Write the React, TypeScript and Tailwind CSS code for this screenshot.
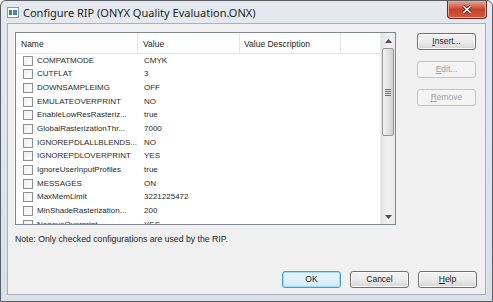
import React from "react";

const rows: [string, string][] = [
  ["COMPATMODE", "CMYK"],
  ["CUTFLAT", "3"],
  ["DOWNSAMPLEIMG", "OFF"],
  ["EMULATEOVERPRINT", "NO"],
  ["EnableLowResRasteriz...", "true"],
  ["GlobalRasterizationThr...", "7000"],
  ["IGNOREPDLALLBLENDS...", "NO"],
  ["IGNOREPDLOVERPRINT", "YES"],
  ["IgnoreUserInputProfiles", "true"],
  ["MESSAGES", "ON"],
  ["MaxMemLimit", "3221225472"],
  ["MinShadeRasterization...", "200"],
  ["NoneveOverprint", "YES"],
];

const ui = { fontFamily: '"Liberation Sans", Arial, sans-serif' };

function Btn({ label, u, disabled, primary }: { label: string; u?: number; disabled?: boolean; primary?: boolean }) {
  return (
    <div
      className={`flex h-[17px] w-[59px] items-center justify-center rounded-[3px] border text-[8.5px] ${
        disabled
          ? "border-[#c4c4c4] bg-[#f4f4f4] text-[#a0a0a0]"
          : primary
          ? "border-[#3c9fd6] bg-gradient-to-b from-[#eaf6fd] to-[#d5e9f5] text-[#1a1a1a] shadow-[inset_0_0_0_1px_#9edcf5]"
          : "border-[#707070] bg-gradient-to-b from-[#f2f2f2] via-[#ebebeb] to-[#d6d6d6] text-[#1a1a1a] shadow-[inset_0_0_0_1px_#fbfbfb]"
      }`}
    >
      {u === undefined ? (
        <span>{label}</span>
      ) : (
        <span>
          {label.slice(0, u)}
          <span className="underline">{label.slice(u, u + 1)}</span>
          {label.slice(u + 1)}
        </span>
      )}
    </div>
  );
}

function Scrollbar() {
  return (
    <div className="flex w-[15px] flex-col bg-gradient-to-r from-[#e3e3e3] via-[#f2f2f2] to-[#e9e9e9] border-l border-[#ececec]">
      <div className="flex h-[15px] items-center justify-center">
        <svg width="7" height="4" viewBox="0 0 7 4">
          <path d="M3.5 0 L7 4 L0 4 Z" fill="#4d4d4d" />
        </svg>
      </div>
      <div className="mx-[1px] flex h-[88px] items-center justify-center rounded-[2px] border border-[#959595] bg-gradient-to-r from-[#f3f3f3] via-[#e4e4e4] to-[#cfcfcf]">
        <div className="flex flex-col gap-[1px]">
          <div className="h-[1px] w-[6px] bg-[#6f6f6f]" />
          <div className="h-[1px] w-[6px] bg-[#6f6f6f]" />
          <div className="h-[1px] w-[6px] bg-[#6f6f6f]" />
          <div className="h-[1px] w-[6px] bg-[#6f6f6f]" />
        </div>
      </div>
      <div className="flex-1" />
      <div className="flex h-[15px] items-center justify-center">
        <svg width="7" height="4" viewBox="0 0 7 4">
          <path d="M0 0 L7 0 L3.5 4 Z" fill="#4d4d4d" />
        </svg>
      </div>
    </div>
  );
}

export default function App() {
  return (
    <div
      className="flex h-[302px] w-[493px] flex-col overflow-hidden rounded-t-[6px] border border-[#5a5f66] bg-gradient-to-b from-[#e4e9f0] to-[#d9e0e8]"
      style={ui}
    >
      {/* title bar */}
      <div className="flex h-[22px] shrink-0 items-start">
        <div className="mt-[6px] ml-[6px] flex h-[11px] w-[12px] items-center gap-[1px] border border-[#8a96a6] bg-white px-[1px]">
          <div className="h-[5px] w-[3px] bg-[#3b8a4e]" />
          <div className="h-[5px] w-[4px] bg-[#4a7ec1]" />
        </div>
        <div className="ml-[4px] mt-[4px] text-[11px] text-[#1e1e1e]" style={{ fontFamily: '"Noto Sans", "Open Sans", sans-serif' }}>
          Configure RIP (ONYX Quality Evaluation.ONX)
        </div>
        <div className="flex-1" />
        <div className="mr-[5px] flex h-[18px] w-[40px] items-center justify-center rounded-b-[4px] border border-t-0 border-[#6d2b24] bg-gradient-to-b from-[#e8a493] via-[#c7432b] to-[#d2573c] shadow-[inset_0_0_0_1px_#eca58f]">
          <svg width="10" height="9" viewBox="0 0 10 9">
            <path d="M1 1 L9 8 M9 1 L1 8" stroke="#4a1c14" strokeWidth="3" />
            <path d="M1 1 L9 8 M9 1 L1 8" stroke="#ffffff" strokeWidth="1.6" />
          </svg>
        </div>
      </div>

      {/* client area */}
      <div className="mx-[6px] mb-[6px] flex flex-1 flex-col border border-[#a7b0bb] bg-[#f0f0f0] px-[7px] pt-[8px] pb-[6px]">
        <div className="flex">
          {/* list */}
          <div className="flex h-[193px] w-[381px] border border-[#828790] bg-white">
            <div className="flex flex-1 flex-col overflow-hidden">
              <div className="flex h-[21px] shrink-0 items-stretch border-b border-[#e5e5e5] text-[8.5px] text-[#1e1e1e]">
                <div className="flex w-[122px] items-center border-r border-[#e5e5e5] pl-[5px] pt-[3px]">Name</div>
                <div className="flex w-[102px] items-center border-r border-[#e5e5e5] pl-[5px] pt-[3px]">Value</div>
                <div className="flex w-[101px] items-center border-r border-[#e5e5e5] pl-[4px] pt-[3px]">Value Description</div>
                <div className="flex-1" />
              </div>
              <div className="flex flex-col">
                {rows.map(([n, v]) => (
                  <div key={n} className="flex h-[13.65px] shrink-0 items-center text-[8px] text-[#2a2a2a]">
                    <div className="ml-[7px] h-[10px] w-[10px] shrink-0 border border-[#8f8f8f] bg-gradient-to-br from-[#ededed] to-white shadow-[inset_0_0_0_1px_#f4f4f4]" />
                    <div className="ml-[4px] w-[107px] shrink-0 whitespace-nowrap">{n}</div>
                    <div className="whitespace-nowrap">{v}</div>
                  </div>
                ))}
              </div>
            </div>
            <Scrollbar />
          </div>
          <div className="ml-[21px] flex flex-col gap-[11px] pt-[1px]">
            <Btn label="Insert..." u={0} />
            <Btn label="Edit..." u={0} disabled />
            <Btn label="Remove" u={0} disabled />
          </div>
        </div>
        <div className="mt-[8px] text-[8.7px] text-[#1e1e1e]">Note: Only checked configurations are used by the RIP.</div>
        <div className="flex-1" />
        <div className="flex justify-end gap-[9px] pr-[1px]">
          <Btn label="OK" primary />
          <Btn label="Cancel" />
          <Btn label="Help" u={0} />
        </div>
      </div>
    </div>
  );
}
